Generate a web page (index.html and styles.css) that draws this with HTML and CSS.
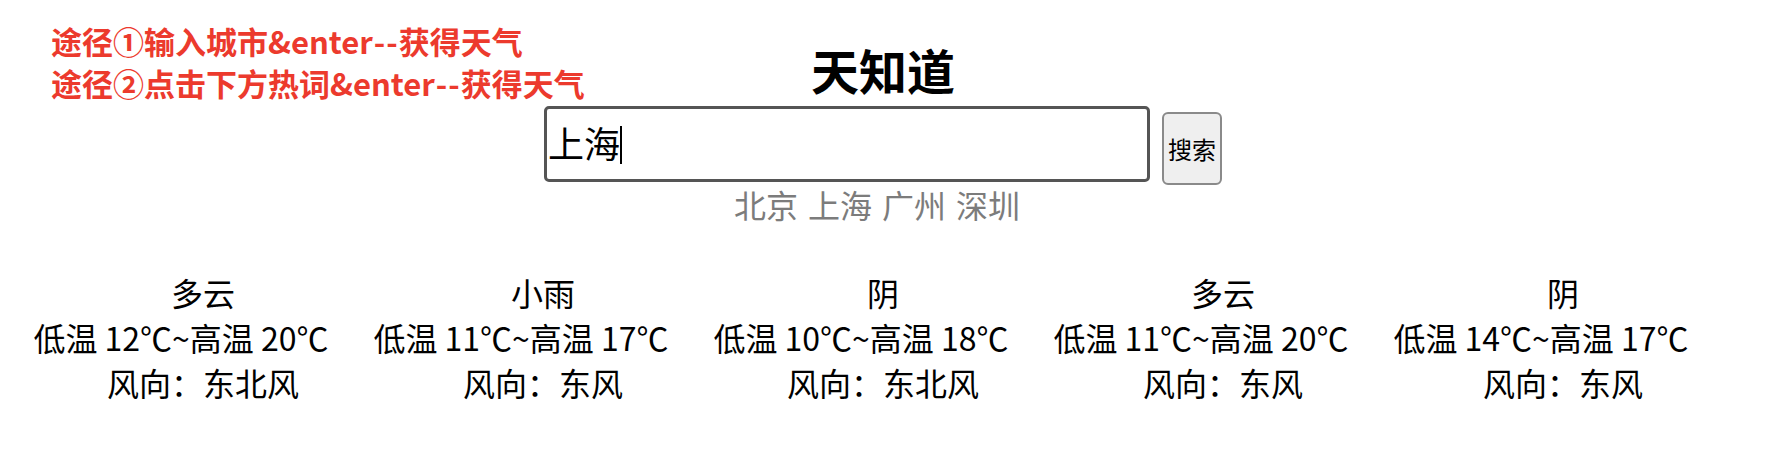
FILE: index.html
```html
<!DOCTYPE html>
<html lang="zh-CN">
<head>
<meta charset="utf-8">
<title>天知道</title>
<link rel="stylesheet" href="styles.css">
</head>
<body>
<div class="tips">
  <p class="tip">途径①输入城市&amp;enter<span class="dash">--</span>获得天气</p>
  <p class="tip">途径②点击下方热词&amp;enter<span class="dash">--</span>获得天气</p>
</div>
<main class="page">
  <h1 class="logo">天知道</h1>
  <div class="search">
    <div class="input-wrap">
      <input class="search-input" type="text" value="上海">
      <span class="caret"></span>
    </div>
    <button class="search-btn" type="button">搜索</button>
  </div>
  <div class="hotkeys">
    <a class="hotkey">北京</a>
    <a class="hotkey">上海</a>
    <a class="hotkey">广州</a>
    <a class="hotkey">深圳</a>
  </div>
  <ul class="weather">
    <li class="day"><div>多云</div><div class="temp">低温 12℃~高温 20℃</div><div>风向：东北风</div></li>
    <li class="day"><div>小雨</div><div class="temp">低温 11℃~高温 17℃</div><div>风向：东风</div></li>
    <li class="day"><div>阴</div><div class="temp">低温 10℃~高温 18℃</div><div>风向：东北风</div></li>
    <li class="day"><div>多云</div><div class="temp">低温 11℃~高温 20℃</div><div>风向：东风</div></li>
    <li class="day"><div>阴</div><div class="temp">低温 14℃~高温 17℃</div><div>风向：东风</div></li>
  </ul>
</main>
</body>
</html>
```
FILE: styles.css
```css
* { box-sizing: border-box; }
html, body { margin: 0; padding: 0; background: #fff; }
body {
  font-family: "Noto Sans CJK SC", "Noto Sans", sans-serif;
  color: #000;
  width: 1766px;
  height: 456px;
  overflow: hidden;
  position: relative;
}
.tips {
  position: absolute;
  left: 51px;
  top: 20px;
}
.tip {
  margin: 0;
  font-size: 31px;
  line-height: 42px;
  font-weight: bold;
  color: #ec3a2d;
  white-space: nowrap;
}
.dash {
  letter-spacing: 1px;
  padding-left: 1px;
}
.page {
  padding-top: 36px;
  display: flex;
  flex-direction: column;
  align-items: center;
}
.logo {
  margin: 0;
  font-size: 48px;
  line-height: 1.4;
  font-weight: bold;
}
.search {
  margin-top: 3px;
  display: flex;
  align-items: flex-start;
  gap: 12px;
}
.input-wrap {
  position: relative;
}
.search-input {
  display: block;
  width: 606px;
  height: 76px;
  border: 3px solid #555;
  border-radius: 5px;
  padding: 0 1px 4px;
  font-family: "Noto Sans CJK SC", sans-serif;
  font-size: 36px;
  color: #000;
  caret-color: transparent;
  outline: none;
  background: #fff;
}
.caret {
  position: absolute;
  left: 76px;
  top: 20px;
  width: 2px;
  height: 38px;
  background: #000;
}
.search-btn {
  margin-top: 6px;
  width: 60px;
  height: 73px;
  padding: 0;
  border: 2px solid #8a8a8a;
  border-radius: 6px;
  background: #efefef;
  font-family: "Noto Sans CJK SC", sans-serif;
  font-size: 24px;
  color: #000;
}
.hotkeys {
  margin-top: -1px;
  padding-right: 12px;
  display: flex;
  gap: 10px;
  font-size: 32px;
  line-height: 40px;
  color: #7c7c7c;
}
.hotkey { cursor: pointer; }
.weather {
  list-style: none;
  margin: 46px 0 0;
  padding: 0 33px;
  width: 100%;
  display: grid;
  grid-template-columns: repeat(5, 1fr);
}
.day {
  text-align: center;
  font-size: 32px;
  line-height: 1.4;
  white-space: nowrap;
}
.temp {
  padding-right: 44px;
}
```
